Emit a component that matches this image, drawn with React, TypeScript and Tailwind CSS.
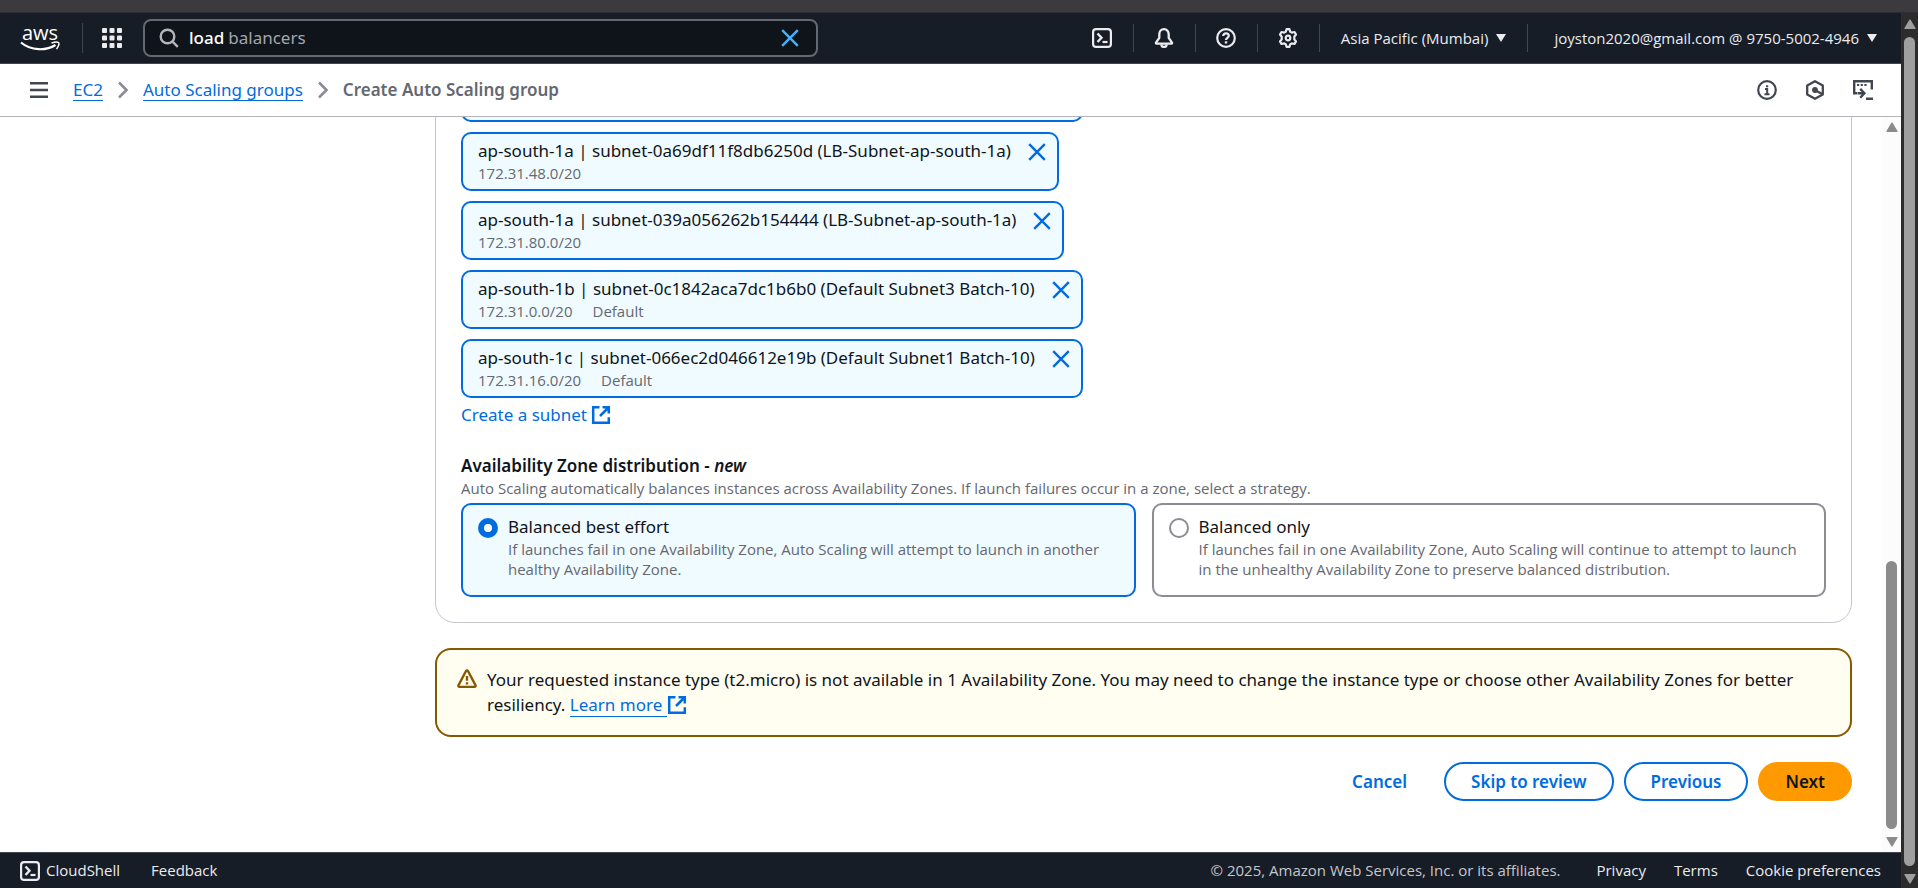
import type { ReactNode } from 'react';

type IconProps = { className?: string };

const stroke = { fill: 'none', stroke: 'currentColor', strokeWidth: 2, strokeLinejoin: 'round' as const };

const small = "font-['Open_Sans',sans-serif] text-[15px]";

function TerminalIcon({ className = 'size-5' }: IconProps) {
  return (
    <svg viewBox="0 0 20 20" className={className} aria-hidden="true" {...stroke}>
      <rect x="1.100" y="1.100" width="17.800" height="17.800" rx="3" strokeWidth="2.200" />
      <path d="M5.500 5.500 9.500 9.800l-4 4.200" strokeWidth="2.400" strokeLinejoin="miter" />
      <path d="M10.500 14h5" strokeWidth="2.200" />
    </svg>
  );
}

function BellIcon() {
  return (
    <svg viewBox="0 0 20 20" className="size-5" aria-hidden="true" {...stroke} strokeWidth="2.300">
      <path d="M10 1.200c-3 0-4.700 2.200-4.700 5v3.600L2 14.600c-.3.600 0 1 .6 1h14.800c.6 0 .9-.4.6-1l-3.300-4.800V6.200c0-2.800-1.700-5-4.700-5Z" />
      <path d="M7.400 16.200c0 3.600 5.200 3.600 5.200 0" />
    </svg>
  );
}

function HelpIcon() {
  return (
    <svg viewBox="0 0 20 20" className="size-5" aria-hidden="true" {...stroke} strokeWidth="2.200">
      <circle cx="10" cy="10" r="8.800" />
      <path d="M7.200 8c0-1.700 1.200-2.700 2.800-2.700s2.800 1 2.800 2.500c0 2-2.800 2.200-2.800 4.200" />
      <path d="M10 13.300v2.200" strokeWidth="2.400" />
    </svg>
  );
}

function GearIcon() {
  return (
    <svg viewBox="0 0 20 20" className="size-5" aria-hidden="true" {...stroke} strokeWidth="2.200">
      <path d="M8.600 1.200h2.800l.9 2.600 1.500.8 2.700-.6 1.500 2.500L16.300 8.700v2.600l1.700 2.200-1.500 2.500-2.700-.6-1.500.8-.9 2.600H8.600l-.9-2.600-1.500-.8-2.700.6L2 13.500l1.700-2.200V8.700L2 6.500 3.500 4l2.700.6 1.500-.8Z" />
      <circle cx="10" cy="10" r="2.300" />
    </svg>
  );
}

function CloseIcon({ className = 'size-5' }: IconProps) {
  return (
    <svg viewBox="0 0 20 20" className={className} aria-hidden="true" {...stroke}>
      <path d="m2.200 2.200 15.600 15.600m0-15.600L2.200 17.800" strokeWidth="2.400" />
    </svg>
  );
}

function ExternalIcon() {
  return (
    <svg viewBox="0 0 20 20" className="inline-block size-5 align-[-4px]" aria-hidden="true" {...stroke} strokeLinejoin="miter" strokeWidth="2.500">
      <path d="M8.500 2.200H2.200v15.600h15.600v-5.500" />
      <path d="M11.500 2.200h6.300v6.300M17.500 2.500 9 11" />
    </svg>
  );
}

function WarningIcon() {
  return (
    <svg viewBox="0 0 20 20" className="size-5 shrink-0" aria-hidden="true" {...stroke} strokeWidth="2.400">
      <path d="M9 2 1.500 16.300c-.4.800.1 1.600 1 1.600h15c.9 0 1.400-.8 1-1.600L11 2c-.5-.9-1.500-.9-2 0Z" />
      <path d="M10 7v4.800M10 13.300v2.200" />
    </svg>
  );
}

function ChevronIcon() {
  return (
    <svg viewBox="0 0 20 20" className="size-5 text-[#8c8c94]" aria-hidden="true" {...stroke} strokeWidth="2.600" strokeLinejoin="miter">
      <path d="m6 2.500 7.500 7.500L6 17.500" />
    </svg>
  );
}

function InfoIcon() {
  return (
    <svg viewBox="0 0 20 20" className="size-5" aria-hidden="true" {...stroke} strokeWidth="2.200">
      <circle cx="10" cy="10" r="8.800" />
      <path d="M8 9h2.200v5.300M7.500 14.300h5M9 6.200h2.200" strokeWidth="2" strokeLinejoin="miter" />
    </svg>
  );
}

function HexIcon() {
  return (
    <svg viewBox="0 0 20 20" className="size-5" aria-hidden="true" {...stroke} strokeWidth="2.300">
      <path d="m10 1.200 7.800 4.400v8.800L10 18.800l-7.800-4.400V5.600Z" />
      <circle cx="10" cy="10" r="2.900" fill="currentColor" stroke="none" />
      <path d="m10 10 7 4" />
    </svg>
  );
}

function ConsoleIcon() {
  return (
    <svg viewBox="0 0 20 20" className="size-5" aria-hidden="true" {...stroke} strokeLinejoin="miter" strokeWidth="2.400">
      <path d="M4.500 13.200H1.200V1.200h17.600v8.300" />
      <path d="M4 5h2.200m1.500 0h2.200m1.500 0h2.200" strokeWidth="2.200" />
      <path d="M5 13.200h6M7.200 8.800l4.200 4.400L7.200 17.700M13 18.700h7" />
    </svg>
  );
}

function AwsLogo() {
  return (
    <a href="#home" aria-label="AWS home" className="flex w-10 flex-col items-center text-white">
      <span className="font-['Open_Sans',sans-serif] text-[20px] leading-4 font-medium">aws</span>
      <svg viewBox="0 0 40 11" className="h-[11px] w-10" aria-hidden="true" fill="none" stroke="currentColor">
        <path d="M1 1.500C11 10 26 10 35.500 4" strokeWidth="2.200" />
        <path d="M31.500 2c3-1 6-1.300 7-.5s.2 4-2 6.500" strokeWidth="1.500" />
      </svg>
    </a>
  );
}

function Caret() {
  return (
    <svg viewBox="0 0 10 8" className="h-2 w-2.5" aria-hidden="true" fill="currentColor">
      <path d="M0 0h10L5 8Z" />
    </svg>
  );
}

function HeaderButton({ label, children }: { label: string; children: ReactNode }) {
  return (
    <div className="flex items-center">
      <button type="button" aria-label={label} className="flex w-[61px] justify-center">
        {children}
      </button>
      <span className="h-7 w-px bg-[#424650]" />
    </div>
  );
}

function Header() {
  return (
    <header className="flex h-[51px] shrink-0 items-center border-b border-[#424650] bg-[#161d26] text-[#ebebf0]">
      <div className="ml-5 flex items-center">
        <AwsLogo />
        <span className="ml-[22px] h-[30px] w-px bg-[#424650]" />
        <button type="button" aria-label="Services" className="ml-[19px]">
          <svg viewBox="0 0 20 20" className="size-5" fill="currentColor" aria-hidden="true">
            {[0, 7.5, 15].map((y) => [0, 7.5, 15].map((x) => <rect key={`${x}-${y}`} x={x} y={y} width="5" height="5" rx="1" />))}
          </svg>
        </button>
      </div>
      <div className="ml-[21px] flex h-[38px] w-[675px] items-center rounded-lg border-2 border-[#656871] bg-[#0f141a] px-3.5">
        <svg viewBox="0 0 20 20" className="size-5 text-[#b4b4bb]" aria-hidden="true" {...stroke} strokeWidth="2.400">
          <circle cx="8.500" cy="8.500" r="6.800" />
          <path d="m13.300 13.300 5.500 5.500" />
        </svg>
        <label className="ml-2.5 flex flex-1 items-center gap-1 text-[17px]">
          <input
            type="text"
            aria-label="Search"
            defaultValue="load"
            className="min-w-0 [field-sizing:content] bg-transparent font-medium text-white outline-none"
          />
          <span className="text-[#a4a4ad]">balancers</span>
        </label>
        <button type="button" aria-label="Clear search" className="mr-0.5 text-[#42b4ff]">
          <CloseIcon />
        </button>
      </div>
      <div className={`ml-auto flex items-center ${small}`}>
        <HeaderButton label="CloudShell"><TerminalIcon /></HeaderButton>
        <HeaderButton label="Notifications"><BellIcon /></HeaderButton>
        <HeaderButton label="Help"><HelpIcon /></HeaderButton>
        <HeaderButton label="Settings"><GearIcon /></HeaderButton>
        <button type="button" className="flex items-center gap-2 px-[21px]">Asia Pacific (Mumbai) <Caret /></button>
        <span className="h-7 w-px bg-[#424650]" />
        <button type="button" className="flex items-center gap-2 pr-6 pl-[26px]">joyston2020@gmail.com @ 9750-5002-4946 <Caret /></button>
      </div>
    </header>
  );
}

function Breadcrumbs() {
  const link = 'border-b border-[#006ce0] leading-5 text-[#006ce0]';
  return (
    <div className="flex h-[53px] shrink-0 items-center border-b border-[#b4b4bb] pr-7 pl-[29px] text-[#424650]">
      <button type="button" aria-label="Open navigation">
        <svg viewBox="0 0 20 20" className="size-5" aria-hidden="true" {...stroke} strokeWidth="2.500">
          <path d="M1 3.300h18M1 10h18M1 16.700h18" />
        </svg>
      </button>
      <nav aria-label="Breadcrumbs" className="ml-6 flex items-center gap-2.5">
        <a href="#ec2" className={link}>EC2</a>
        <ChevronIcon />
        <a href="#groups" className={link}>Auto Scaling groups</a>
        <ChevronIcon />
        <span className="font-semibold text-[#656871]">Create Auto Scaling group</span>
      </nav>
      <div className="ml-auto flex items-center gap-7">
        <button type="button" aria-label="Info"><InfoIcon /></button>
        <button type="button" aria-label="Assistant"><HexIcon /></button>
        <button type="button" aria-label="Console"><ConsoleIcon /></button>
      </div>
    </div>
  );
}

const subnets = [
  { name: 'ap-south-1a | subnet-0a69df11f8db6250d (LB-Subnet-ap-south-1a)', tags: ['172.31.48.0/20'] },
  { name: 'ap-south-1a | subnet-039a056262b154444 (LB-Subnet-ap-south-1a)', tags: ['172.31.80.0/20'] },
  { name: 'ap-south-1b | subnet-0c1842aca7dc1b6b0 (Default Subnet3 Batch-10)', tags: ['172.31.0.0/20', 'Default'] },
  { name: 'ap-south-1c | subnet-066ec2d046612e19b (Default Subnet1 Batch-10)', tags: ['172.31.16.0/20', 'Default'] },
];

const chip = 'flex h-[59px] items-start gap-4 rounded-[10px] border-2 border-[#006ce0] bg-[#f0fbff]';

function SubnetList() {
  return (
    <ul className="flex flex-col items-start gap-2.5">
      <li className={`${chip} w-[622px]`} />
      {subnets.map((s) => (
        <li key={s.name} className={`${chip} pt-1 pr-2.5 pl-[15px]`}>
          <div>
            <div className="leading-[25px]">{s.name}</div>
            <div className={`flex gap-5 ${small} leading-5 text-[#656871]`}>
              {s.tags.map((t) => <span key={t}>{t}</span>)}
            </div>
          </div>
          <button type="button" aria-label={`Remove ${s.name}`} className="mt-1 text-[#006ce0]">
            <CloseIcon />
          </button>
        </li>
      ))}
    </ul>
  );
}

function Tile({ title, text, checked }: { title: string; text: string; checked?: boolean }) {
  return (
    <label className="flex flex-1 items-start gap-2.5 rounded-[10px] border-2 border-[#8c8c94] px-[15px] pt-[9px] pb-4 has-checked:border-[#006ce0] has-checked:bg-[#f0fbff]">
      <input
        type="radio"
        name="distribution"
        defaultChecked={checked}
        className="mt-1 size-5 shrink-0 appearance-none rounded-full border-2 border-[#8c8c94] bg-white checked:border-[6px] checked:border-[#006ce0]"
      />
      <span>
        <span className="block leading-[25px]">{title}</span>
        <span className={`block ${small} leading-5 text-[#656871]`}>{text}</span>
      </span>
    </label>
  );
}

function Content() {
  const button = 'h-[39px] rounded-full border-2 px-[25px] font-semibold';
  return (
    <main className="flex min-w-0 flex-1 flex-col justify-end overflow-hidden pr-[30px] pb-[51px] pl-[435px]">
      <section className="shrink-0 rounded-[20px] border border-[#c6c6cd] p-[25px]">
        <SubnetList />
        <a href="#create-subnet" className="mt-1 block leading-[25px] text-[#006ce0]">Create a subnet <ExternalIcon /></a>
        <fieldset className="mt-[26px]">
          <legend className="leading-[25px] font-semibold">Availability Zone distribution - <em>new</em></legend>
          <p className={`mb-[5px] ${small} leading-5 text-[#656871]`}>
            Auto Scaling automatically balances instances across Availability Zones. If launch failures occur in a zone, select a strategy.
          </p>
          <div className="flex gap-4">
            <Tile checked title="Balanced best effort" text="If launches fail in one Availability Zone, Auto Scaling will attempt to launch in another healthy Availability Zone." />
            <Tile title="Balanced only" text="If launches fail in one Availability Zone, Auto Scaling will continue to attempt to launch in the unhealthy Availability Zone to preserve balanced distribution." />
          </div>
        </fieldset>
      </section>
      <div role="alert" className="mt-[25px] flex h-[89px] shrink-0 items-start gap-2.5 rounded-2xl border-2 border-[#855900] bg-[#fffef0] px-5 pt-[17px]">
        <span className="mt-0.5 text-[#855900]"><WarningIcon /></span>
        <p className="leading-[25px]">
          Your requested instance type (t2.micro) is not available in 1 Availability Zone. You may need to change the instance type or choose other Availability Zones for better resiliency.{' '}
          <a href="#learn" className="text-[#006ce0]"><span className="border-b border-[#006ce0] whitespace-pre">Learn more </span><ExternalIcon /></a>
        </p>
      </div>
      <div className="mt-[25px] flex shrink-0 justify-end gap-2.5 text-[#006ce0]">
        <button type="button" className={`${button} border-transparent`}>Cancel</button>
        <button type="button" className={`${button} border-[#006ce0]`}>Skip to review</button>
        <button type="button" className={`${button} border-[#006ce0]`}>Previous</button>
        <button type="button" className={`${button} border-[#ff9900] bg-[#ff9900] text-[#0f141a]`}>Next</button>
      </div>
    </main>
  );
}

function ScrollArrow({ down }: { down?: boolean }) {
  return (
    <svg viewBox="0 0 12 10" className="h-2.5 w-3 shrink-0" aria-hidden="true" fill="currentColor">
      <path d={down ? 'M1 0h10q1 0 .5 1L6.600 9.200q-.6.800-1.200 0L.5 1Q0 0 1 0Z' : 'M1 10h10q1 0 .5-1L6.600.8Q6 0 5.400.8L.5 9q-.5 1 .5 1Z'} />
    </svg>
  );
}

function Footer() {
  return (
    <footer className={`flex h-9 shrink-0 items-center border-t border-[#424650] bg-[#161d26] px-5 ${small} text-[#ebebf0]`}>
      <button type="button" className="flex items-center gap-1.5"><TerminalIcon />CloudShell</button>
      <a href="#feedback" className="ml-[31px]">Feedback</a>
      <span className="ml-auto text-[#c6c6cd]">© 2025, Amazon Web Services, Inc. or its affiliates.</span>
      <a href="#privacy" className="ml-9">Privacy</a>
      <a href="#terms" className="ml-7">Terms</a>
      <a href="#cookies" className="ml-7">Cookie preferences</a>
    </footer>
  );
}

export default function App() {
  return (
    <div className="flex h-screen flex-col bg-white font-['Noto_Sans',sans-serif] text-[17px] text-[#0f141a]">
      <div className="h-[13px] shrink-0 border-b border-[#2f2e32] bg-[#3c3a3f]" />
      <div className="flex min-h-0 flex-1">
        <div className="flex min-w-0 flex-1 flex-col">
          <Header />
          <Breadcrumbs />
          <div className="flex min-h-0 flex-1">
            <Content />
            <div className="flex w-[19px] shrink-0 flex-col items-center bg-[#fcfcfc] py-[5px] text-[#8b8b8b]">
              <ScrollArrow />
              <div className="mt-auto mb-2 h-[268px] w-[11px] rounded-full bg-[#8b8b8b]" />
              <ScrollArrow down />
            </div>
          </div>
          <Footer />
        </div>
        <div className="flex w-[17px] shrink-0 flex-col items-center gap-2 bg-[#2c2c2c] pt-[6px] pb-1 text-[#9f9f9f]">
          <ScrollArrow />
          <div className="w-[11px] flex-1 rounded-full bg-[#9f9f9f]" />
          <ScrollArrow down />
        </div>
      </div>
    </div>
  );
}
